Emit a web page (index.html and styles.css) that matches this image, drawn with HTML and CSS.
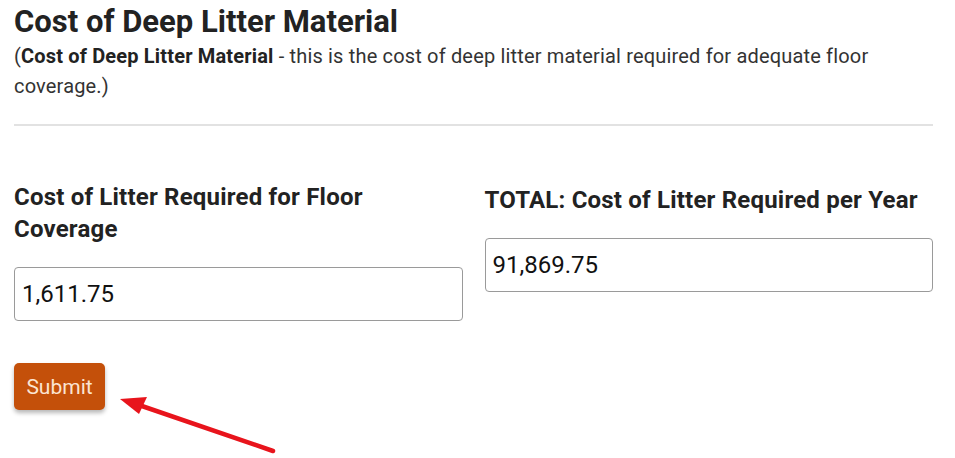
FILE: index.html
```html
<!DOCTYPE html>
<html lang="en">
<head>
    <meta charset="UTF-8">
    <meta name="viewport" content="width=device-width, initial-scale=1.0">
    <title>Cost of Deep Litter Material</title>
    <link rel="stylesheet" href="styles.css">
</head>
<body>
    <div class="page">
        <header class="intro">
            <h1>Cost of Deep Litter Material</h1>
            <p>(<strong>Cost of Deep Litter Material</strong> - this is the cost of deep litter material required for adequate floor coverage.)</p>
        </header>

        <hr class="divider">

        <form class="calc-form">
            <div class="fields">
                <div class="field">
                    <label for="floor-cost">Cost of Litter Required for Floor Coverage</label>
                    <input type="text" id="floor-cost" value="1,611.75">
                </div>
                <div class="field field-total">
                    <label for="year-cost">TOTAL: Cost of Litter Required per Year</label>
                    <input type="text" id="year-cost" value="91,869.75">
                </div>
            </div>
            <button type="button" class="btn-submit">Submit</button>
        </form>
    </div>

    <!-- annotation arrow pointing at the button -->
    <svg class="pointer-arrow" width="955" height="458" viewBox="0 0 955 458">
        <line x1="273" y1="451" x2="136" y2="404" stroke="#e8141c" stroke-width="4.5" stroke-linecap="round"/>
        <polygon points="120,399 147,397 139,414" fill="#e8141c"/>
    </svg>
</body>
</html>
```

FILE: styles.css
```css
html, body {
    height: 100%;
}

body {
    font-family: Roboto, "Noto Sans", sans-serif;
    color: #222;
    background: #fff;
    margin: 0;
    padding: 0;
    position: relative;
    overflow: hidden;
}

.page {
    width: 919px;
    padding: 3px 0 0 14px;
}

.intro h1 {
    font-size: 31px;
    font-weight: 700;
    line-height: 38px;
    margin: 0;
    color: #222;
}

.intro p {
    font-size: 20px;
    line-height: 30px;
    letter-spacing: 0.17px;
    margin: 0;
    color: #333;
}

.intro p strong {
    color: #222;
}

.divider {
    border: 0;
    border-top: 2px solid #e2e2e2;
    margin: 23px 0 0;
}

.calc-form {
    margin-top: 55px;
}

.fields {
    display: flex;
    gap: 22px;
    align-items: flex-start;
}

.field {
    flex: 1;
    display: flex;
    flex-direction: column;
}

.field label {
    font-size: 24px;
    font-weight: 700;
    line-height: 32px;
    letter-spacing: 0.2px;
    color: #222;
    margin-bottom: 22px;
}

.field-total label {
    margin-top: 3px;
}

.field input {
    font-family: Roboto, "Noto Sans", sans-serif;
    font-size: 24px;
    color: #111;
    height: 54px;
    box-sizing: border-box;
    padding: 0 7px;
    border: 1.5px solid #9a9a9a;
    border-radius: 4px;
    background: #fff;
    outline: none;
}

.btn-submit {
    margin-top: 42px;
    width: 91px;
    height: 47px;
    font-family: Roboto, "Noto Sans", sans-serif;
    font-size: 21px;
    color: #fbe4d2;
    background: #c4500a;
    border: 0;
    border-radius: 5px;
    box-shadow: 0 3px 4px rgba(0, 0, 0, 0.28);
    cursor: pointer;
}

.pointer-arrow {
    position: absolute;
    top: 0;
    left: 0;
    pointer-events: none;
}
```
